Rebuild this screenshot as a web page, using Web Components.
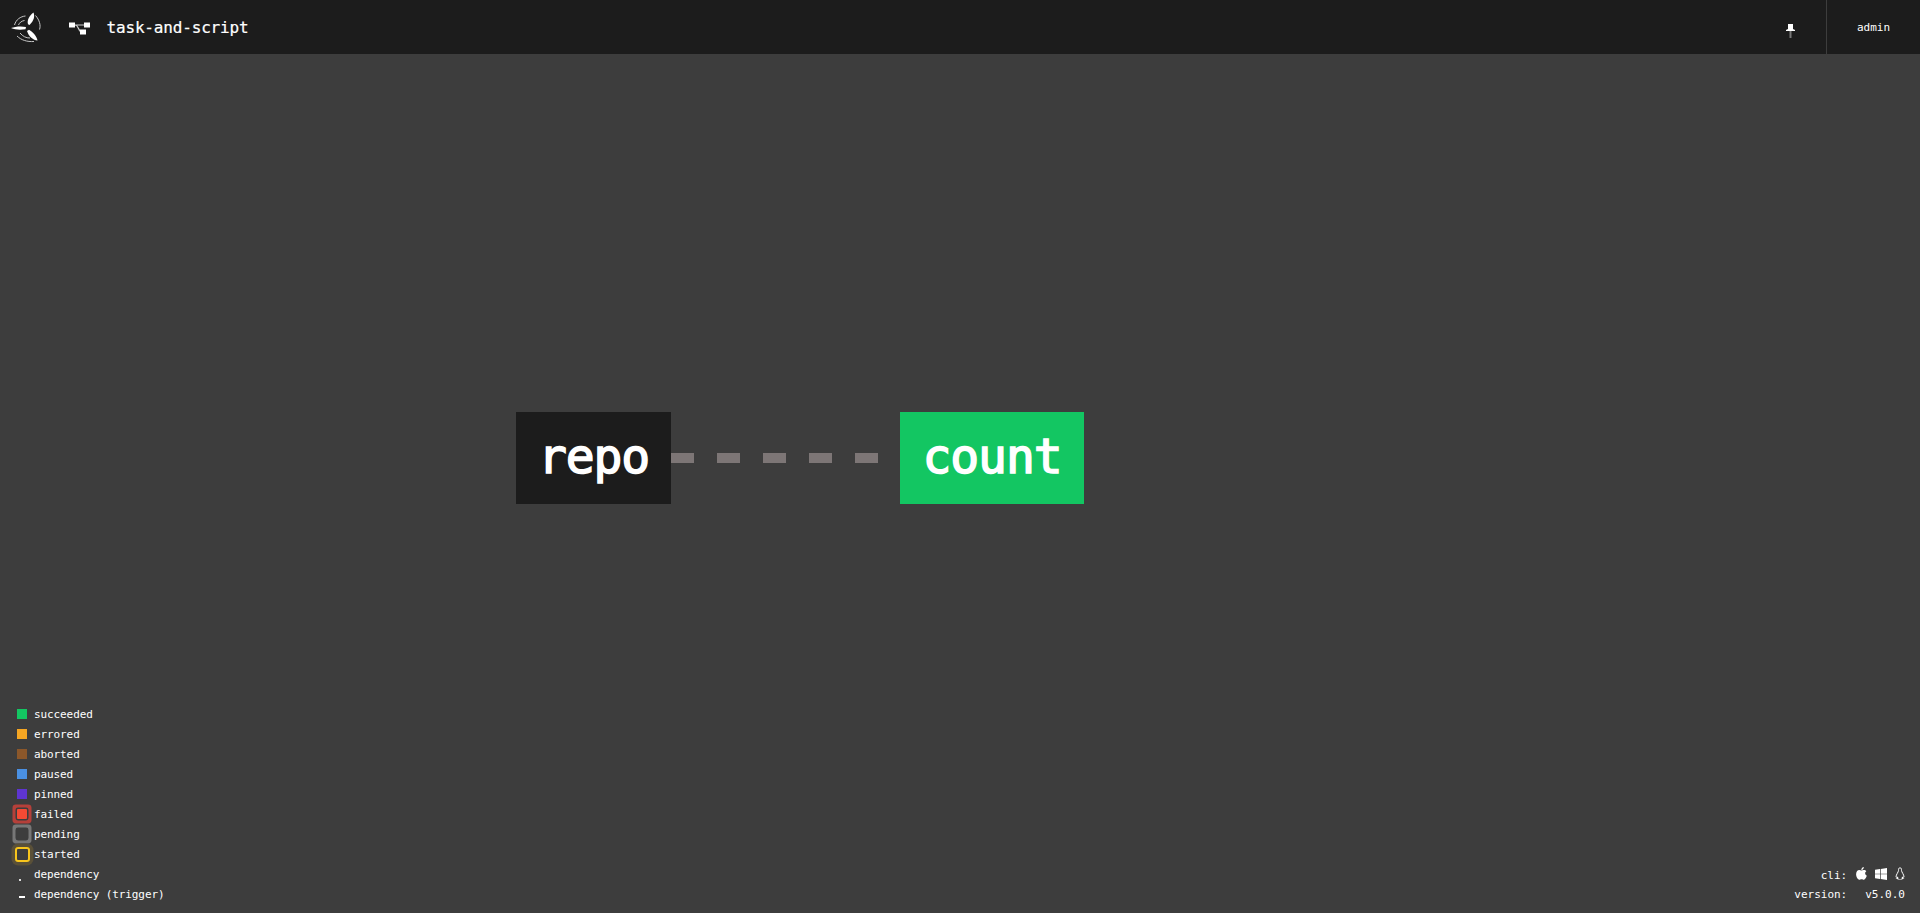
<!DOCTYPE html>
<html>
<head>
<meta charset="utf-8">
<title>task-and-script</title>
<style>
  html, body { margin: 0; height: 100%; background: #3d3d3d; }
  body { font-family: "DejaVu Sans Mono", monospace; color: #fff; overflow: hidden; }
</style>
</head>
<body>
<dag-page>
  <top-bar slot="bar" title-text="task-and-script" user="admin"></top-bar>
  <dag-node slot="graph" label="repo" x="516" y="358" w="155"></dag-node>
  <dag-edge slot="graph" x="671" y="399" length="207"></dag-edge>
  <dag-node slot="graph" label="count" status="succeeded" x="900" y="358" w="184"></dag-node>
  <dag-legend slot="legend">
    <legend-row kind="succeeded">succeeded</legend-row>
    <legend-row kind="errored">errored</legend-row>
    <legend-row kind="aborted">aborted</legend-row>
    <legend-row kind="paused">paused</legend-row>
    <legend-row kind="pinned">pinned</legend-row>
    <legend-row kind="failed">failed</legend-row>
    <legend-row kind="pending">pending</legend-row>
    <legend-row kind="started">started</legend-row>
    <legend-row kind="dep">dependency</legend-row>
    <legend-row kind="trigger">dependency (trigger)</legend-row>
  </dag-legend>
  <version-info slot="version" version="v5.0.0"></version-info>
</dag-page>

<script>
class DagPage extends HTMLElement {
  constructor() {
    super();
    this.attachShadow({ mode: 'open' });
    this.shadowRoot.innerHTML = `
      <style>
        :host { display: flex; flex-direction: column; height: 913px; background: #3d3d3d; }
        .canvas { position: relative; flex: 1; }
        .legend { position: absolute; left: 14.500px; bottom: 9px; }
        .version { position: absolute; right: 15px; bottom: 12px; }
      </style>
      <slot name="bar"></slot>
      <div class="canvas">
        <slot name="graph"></slot>
        <div class="legend"><slot name="legend"></slot></div>
        <div class="version"><slot name="version"></slot></div>
      </div>
    `;
  }
}

class TopBar extends HTMLElement {
  constructor() {
    super();
    this.attachShadow({ mode: 'open' });
    this.shadowRoot.innerHTML = `
      <style>
        :host { display: flex; align-items: center; height: 54px; background: #1c1c1c; color: #fff; }
        .logo { display: block; margin-left: 10px; }
        .dag { display: block; margin-left: 27px; }
        h1 { margin: 0 0 0 15.500px; font: 400 16px "DejaVu Sans Mono", monospace; letter-spacing: -.17px; -webkit-text-stroke: .2px #fff; }
        .spacer { flex: 1; }
        .pin { display: block; margin: 7px 31px 0 0; }
        .user { align-self: stretch; width: 93px; border-left: 1px solid #3d3d3d; display: flex; align-items: center; justify-content: center; font-size: 11px; }
      </style>
      <svg class="logo" width="32" height="32" viewBox="0 0 32 32" fill="#fff">
        <path d="M1 17 C5 15.500 11 15 16 16 L15.500 18.300 C10 19 5 18.800 1 17Z"/>
        <path d="M23.500 1.500 C25 5.500 24 9.500 19.500 14 L18 13.300 C16.800 9.500 19 5 23.500 1.500Z"/>
        <path d="M27.500 29.500 C23 29 19 26 17 20 L19 18.800 C23 21 26.500 25 27.500 29.500Z"/>
        <g fill="none" stroke="#fff" stroke-width="1" opacity=".75">
          <path d="M4.500 14 C6 8.500 10.500 5.500 15.500 5"/>
          <path d="M8.500 14 C9.500 11.500 11.500 10 14.500 9.500"/>
          <path d="M25.500 4.500 C29.500 9 31 14.500 29.500 18.500"/>
          <path d="M7 25 C11 29 17 31 24 30.500"/>
          <path d="M10 22 C13 25.500 16 27 20 27"/>
        </g>
      </svg>
      <svg class="dag" width="22" height="16" viewBox="0 0 22 16">
        <path d="M4 6 H18 M6 6 C10 6 9 13 13 13 H15" fill="none" stroke="#ccc" stroke-width="1.200"/>
        <rect x="0" y="3.500" width="6" height="5" fill="#fff"/>
        <rect x="15" y="3.500" width="6" height="5" fill="#fff"/>
        <rect x="11" y="10.500" width="6" height="5" fill="#fff"/>
      </svg>
      <h1 id="title"></h1>
      <div class="spacer"></div>
      <svg class="pin" width="9" height="14" viewBox="0 0 9 14">
        <rect x="3.500" y="7" width="2" height="7" fill="#777"/>
        <path d="M2 0 H7 V5 L9 6 V7 H0 V6 L2 5Z" fill="#fff"/>
      </svg>
      <div class="user" id="user"></div>
    `;
  }

  connectedCallback() {
    this.shadowRoot.getElementById('title').textContent = this.getAttribute('title-text');
    this.shadowRoot.getElementById('user').textContent = this.getAttribute('user');
  }
}

class DagNode extends HTMLElement {
  constructor() {
    super();
    this.attachShadow({ mode: 'open' });
    this.shadowRoot.innerHTML = `
      <style>
        :host { position: absolute; display: flex; align-items: center; justify-content: center; height: 92px; padding-bottom: 4px; box-sizing: border-box; background: #1c1c1c; color: #fff; font: 400 48px "DejaVu Sans Mono", monospace; letter-spacing: -1.100px; -webkit-text-stroke: 1.500px #fff; }
        :host([status="succeeded"]) { background: #13c662; }
      </style>
      <span id="label"></span>
    `;
  }

  connectedCallback() {
    this.shadowRoot.getElementById('label').textContent = this.getAttribute('label');
    this.style.left = this.getAttribute('x') + 'px';
    this.style.top = this.getAttribute('y') + 'px';
    this.style.width = this.getAttribute('w') + 'px';
  }
}

class DagEdge extends HTMLElement {
  constructor() {
    super();
    this.attachShadow({ mode: 'open' });
    this.shadowRoot.innerHTML = `
      <style>
        :host { position: absolute; display: block; height: 10px; }
        .dash { height: 10px; background: repeating-linear-gradient(to right, #7d7676 0 23px, transparent 23px 46px); }
      </style>
      <div class="dash"></div>
    `;
  }

  connectedCallback() {
    this.style.left = this.getAttribute('x') + 'px';
    this.style.top = this.getAttribute('y') + 'px';
    this.style.width = this.getAttribute('length') + 'px';
  }
}

class DagLegend extends HTMLElement {
  constructor() {
    super();
    this.attachShadow({ mode: 'open' });
    this.shadowRoot.innerHTML = `
      <style>
        :host { display: flex; flex-direction: column; font: 400 11px "DejaVu Sans Mono", monospace; letter-spacing: -.1px; color: #fff; }
      </style>
      <slot></slot>
    `;
  }
}

class LegendRow extends HTMLElement {
  constructor() {
    super();
    this.attachShadow({ mode: 'open' });
    this.shadowRoot.innerHTML = `
      <style>
        :host { display: flex; align-items: center; height: 20px; gap: 4.500px; }
        .mark { position: relative; width: 15px; height: 20px; display: flex; align-items: center; justify-content: center; }
        .fill { width: 10px; height: 10px; flex: none; }
        :host([kind="succeeded"]) .fill { background: #13c662; }
        :host([kind="errored"]) .fill { background: #f5a623; }
        :host([kind="aborted"]) .fill { background: #8b572a; }
        :host([kind="paused"]) .fill { background: #4a90e2; }
        :host([kind="pinned"]) .fill { background: #5e35d0; }
        :host([kind="failed"]) .fill { background: #f44a34; box-shadow: 0 0 0 1.500px #3d3d3d, 0 0 0 4.500px #b5403a; border-radius: 1px; }
        :host([kind="pending"]) .fill { background: #3d3d3d; box-shadow: 0 0 0 1.500px #3d3d3d, 0 0 0 4.500px #777; border-radius: 1px; }
        :host([kind="started"]) .fill { width: 11px; height: 11px; border: 2px solid #f8c51c; border-radius: 3px; box-sizing: content-box; box-shadow: 0 0 0 3.500px #5a5038; }
        :host([kind="dep"]) .fill { width: 2px; height: 2px; background: #ddd; margin: 12px 4px 0 0; }
        :host([kind="trigger"]) .fill { width: 6px; height: 2px; background: #fff; margin-top: 6px; }
      </style>
      <span class="mark"><span class="fill"></span></span>
      <span><slot></slot></span>
    `;
  }
}

class VersionInfo extends HTMLElement {
  constructor() {
    super();
    this.attachShadow({ mode: 'open' });
    this.shadowRoot.innerHTML = `
      <style>
        :host { display: grid; grid-template-columns: auto auto; column-gap: 18px; row-gap: 6px; align-items: center; justify-items: end; font: 400 11px "DejaVu Sans Mono", monospace; color: #fff; }
        .icons { display: flex; gap: 8px; align-items: center; margin: -4px 0 0 -12px; }
        svg { display: block; }
      </style>
      <span>cli:</span>
      <span class="icons">
        <svg width="11" height="13" viewBox="0 0 11 13" fill="#fff">
          <path d="M7.800 0 C7.900 1.500 6.700 3 5.300 2.900 C5.200 1.500 6.400 0.200 7.800 0Z"/>
          <path d="M5.400 3.500 C6 3.500 6.900 2.900 8 3 C9 3 9.800 3.500 10.300 4.200 C8.500 5.300 8.800 7.900 10.800 8.700 C10.300 10.300 9.100 12.600 7.900 12.700 C7 12.700 6.700 12.200 5.600 12.200 C4.500 12.200 4.200 12.700 3.300 12.700 C2 12.700 0.100 9.900 0.100 7.200 C0.100 4.700 1.700 3.100 3.200 3.100 C4.100 3.100 4.900 3.500 5.400 3.500Z"/>
        </svg>
        <svg width="12" height="12" viewBox="0 0 12 12" fill="#fff">
          <path d="M0 1.700 L5 1 V5.700 H0Z M5.700 0.900 L12 0 V5.700 H5.700Z M0 6.300 H5 V11 L0 10.300Z M5.700 6.300 H12 V12 L5.700 11.100Z"/>
        </svg>
        <svg width="10" height="13" viewBox="0 0 10 13" fill="none" stroke="#fff" stroke-width="1">
          <path d="M5 .8 C3.600 .8 3.500 2.200 3.500 3.500 C3.500 5 1 7.500 1 10 M5 .8 C6.400 .8 6.500 2.200 6.500 3.500 C6.500 5 9 7.500 9 10"/>
          <path d="M.5 11 L3 9.500 L3.500 12 H6.500 L7 9.500 L9.500 11 L7 12.500 H3Z" fill="#fff" stroke="none"/>
        </svg>
      </span>
      <span>version:</span>
      <span id="version"></span>
    `;
  }

  connectedCallback() {
    this.shadowRoot.getElementById('version').textContent = this.getAttribute('version');
  }
}

customElements.define('dag-page', DagPage);
customElements.define('top-bar', TopBar);
customElements.define('dag-node', DagNode);
customElements.define('dag-edge', DagEdge);
customElements.define('dag-legend', DagLegend);
customElements.define('legend-row', LegendRow);
customElements.define('version-info', VersionInfo);
</script>
</body>
</html>
